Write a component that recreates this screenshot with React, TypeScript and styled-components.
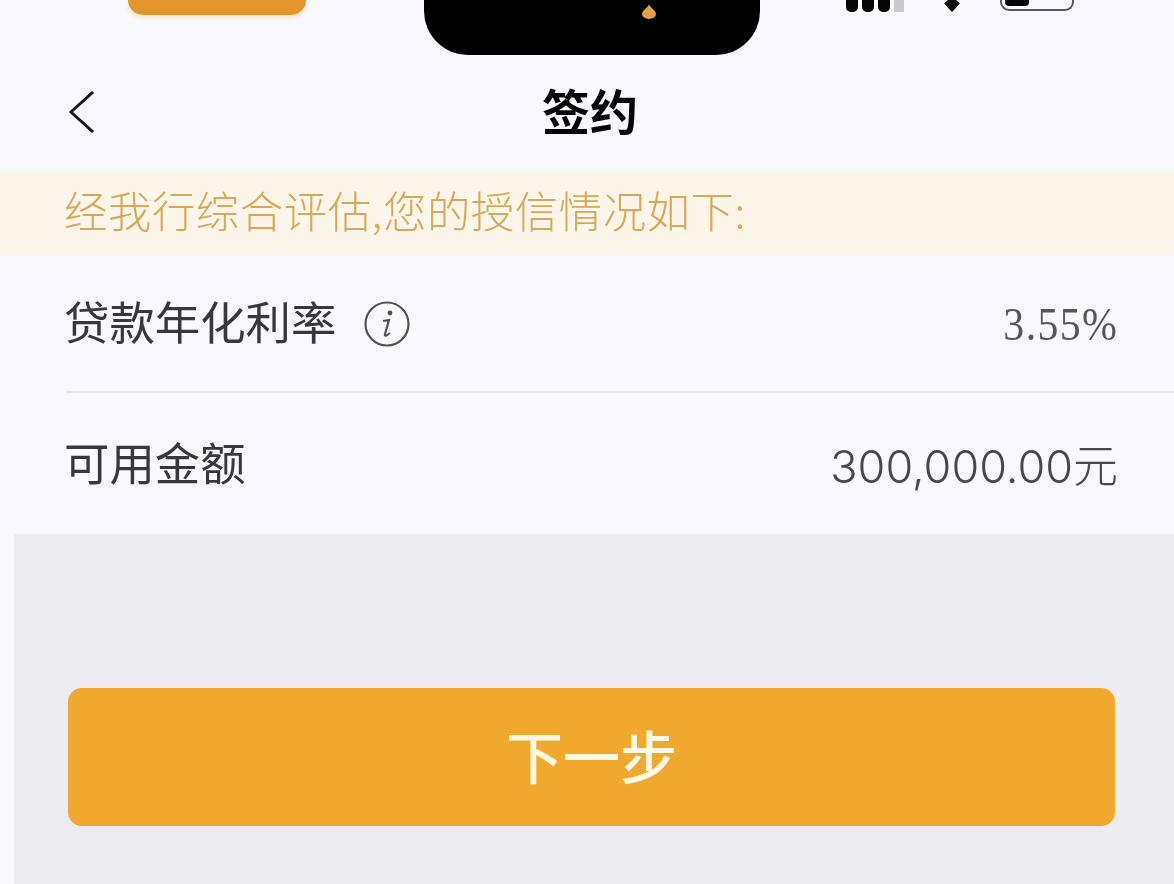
import React from 'react';
import styled, {createGlobalStyle} from 'styled-components';

const GlobalStyle = createGlobalStyle`
    html, body {
        margin: 0;
        padding: 0;
        background: #f8f8fe;
    }
    body {
        font-family: "Noto Sans CJK SC", "Noto Sans", sans-serif;
    }
`;

const Page = styled.div`
    width: 1174px;
    height: 884px;
    overflow: hidden;
    display: flex;
    flex-direction: column;
    background: #f8f8fe;
    filter: blur(0.7px);
`;

const StatusBar = styled.div`
    height: 55px;
    flex: none;
    display: flex;
    align-items: flex-start;
`;

const AppPill = styled.div`
    width: 178px;
    height: 15px;
    margin-left: 128px;
    background: #e4952c;
    border-radius: 0 0 24px 24px;
    box-shadow: 0 3px 5px rgba(240, 190, 110, 0.3);
`;

const Notch = styled.div`
    width: 336px;
    height: 55px;
    margin-left: 118px;
    padding-left: 217px;
    box-sizing: border-box;
    background: #000;
    border-radius: 0 0 44px 44px;
`;

const Signal = styled.div`
    display: flex;
    gap: 4px;
    margin-left: 86px;
`;

const SignalBar = styled.span<{$off?: boolean}>`
    width: ${(p) => (p.$off ? '10px' : '12px')};
    height: 12px;
    background: ${(p) => (p.$off ? '#c9c9ce' : '#050505')};
    border-radius: ${(p) => (p.$off ? '0' : '0 0 5px 5px')};
`;

const WifiIcon = styled.svg`
    width: 16px;
    height: 12px;
    margin-left: 40px;
`;

const Battery = styled.div`
    width: 74px;
    height: 11px;
    margin-left: 40px;
    padding: 0 3px;
    box-sizing: border-box;
    border: 2px solid #5a5a5e;
    border-top: 0;
    border-radius: 0 0 9px 9px;
`;

const BatteryFill = styled.div`
    width: 24px;
    height: 6px;
    background: #050505;
    border-radius: 0 0 4px 4px;
`;

const NavBar = styled.header`
    height: 117px;
    flex: none;
    display: grid;
    grid-template-columns: 1fr auto 1fr;
    align-items: center;
    padding: 0 68px;
`;

const BackIcon = styled.svg`
    width: 27px;
    height: 44px;
    display: block;
    margin-top: -3px;
`;

const Title = styled.h1`
    margin: 0 0 10px;
    font-size: 48px;
    line-height: 60px;
    font-weight: 700;
    color: #060608;
    transform: translateX(3px);
`;

const Notice = styled.div`
    height: 82px;
    flex: none;
    display: flex;
    align-items: center;
    padding: 0 0 8px 64px;
    box-sizing: border-box;
    background: #fcf5e9;
    box-shadow: 0 0 6px #fcf5e9;
    font-size: 43.4px;
    letter-spacing: 0.55px;
    font-weight: 300;
    color: #d8a757;
    white-space: nowrap;
`;

const InfoRow = styled.div<{$divided?: boolean}>`
    flex: none;
    height: ${(p) => (p.$divided ? '139px' : '141px')};
    margin-left: 66px;
    padding: 0 56px 6px 0;
    display: flex;
    align-items: center;
    justify-content: space-between;
    box-sizing: border-box;
    border-bottom: ${(p) => (p.$divided ? '2px solid #e5e5ec' : '0')};
`;

const Label = styled.div`
    display: flex;
    align-items: center;
    gap: 27px;
    margin-left: -2px;
    font-size: 45.4px;
    font-weight: 400;
    line-height: 56px;
    color: #38383c;
`;

const InfoIcon = styled.svg`
    width: 48px;
    height: 48px;
    margin-top: 8px;
`;

const Rate = styled.div`
    font-family: "Liberation Serif", serif;
    font-size: 46px;
    letter-spacing: 1.5px;
    color: #56565a;
    margin-top: 10px;
    transform: scaleX(0.91);
    transform-origin: right center;
`;

const Amount = styled.div`
    font-family: "Inter", "Noto Sans CJK SC", sans-serif;
    font-size: 45px;
    font-weight: 300;
    color: #47474c;
    margin-top: 6px;
`;

const Footer = styled.div`
    flex: 1;
    margin-left: 14px;
    padding: 154px 59px 0 54px;
    background: #ebebf0;
`;

const NextButton = styled.button`
    width: 100%;
    height: 138px;
    padding: 0 0 6px;
    display: flex;
    align-items: center;
    justify-content: center;
    border: 0;
    border-radius: 14px;
    background: #f0a92e;
    font-family: inherit;
    font-size: 57px;
    font-weight: 500;
    color: #fff8e2;
`;

export default function App() {
    return (
        <Page>
            <GlobalStyle/>
            <StatusBar>
                <AppPill/>
                <Notch>
                    <svg width='16' height='15' viewBox='0 0 16 15'>
                        <path d='M8 0 C9 4 15 6 15 10 a7 5 0 0 1 -14 0 C1 6 7 4 8 0 Z' fill='#e2a043'/>
                    </svg>
                </Notch>
                <Signal>
                    <SignalBar/>
                    <SignalBar/>
                    <SignalBar/>
                    <SignalBar $off={true}/>
                </Signal>
                <WifiIcon viewBox='0 0 16 12'>
                    <path d='M4 0 L12 0 L16 3.5 L8 12 L0 3.5 Z' fill='#0a0a0a'/>
                </WifiIcon>
                <Battery>
                    <BatteryFill/>
                </Battery>
            </StatusBar>
            <NavBar>
                <BackIcon viewBox='0 0 27 44'>
                    <path d='M25 2 L3 22 L25 42' fill='none' stroke='#17171a' strokeWidth='3'/>
                </BackIcon>
                <Title>{'签约'}</Title>
            </NavBar>
            <Notice>{'经我行综合评估,您的授信情况如下:'}</Notice>
            <InfoRow $divided={true}>
                <Label>
                    {'贷款年化利率'}
                    <InfoIcon viewBox='0 0 48 48'>
                        <circle cx='24' cy='24' r='21.5' fill='none' stroke='#505055' strokeWidth='2.2'/>
                        <circle cx='27' cy='13' r='2.4' fill='#505055'/>
                        <path d='M20 21 L26 20 L22 34 C21.5 36 23 36.5 27 33' fill='none' stroke='#505055' strokeWidth='2.2'/>
                    </InfoIcon>
                </Label>
                <Rate>{'3.55%'}</Rate>
            </InfoRow>
            <InfoRow>
                <Label>{'可用金额'}</Label>
                <Amount>{'300,000.00元'}</Amount>
            </InfoRow>
            <Footer>
                <NextButton>{'下一步'}</NextButton>
            </Footer>
        </Page>
    );
}
